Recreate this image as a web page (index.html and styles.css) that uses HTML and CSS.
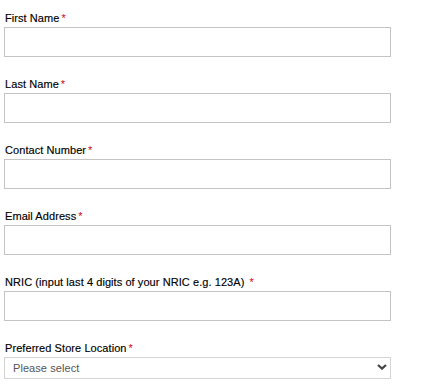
FILE: index.html
```html
<!DOCTYPE html>
<html lang="en">
<head>
	<meta charset="UTF-8">
	<title>Enquiry Form</title>
	<link rel="stylesheet" href="styles.css">
</head>
<body>
	<form class="enquiry-form">
		<div class="field">
			<label for="firstName">First Name<span class="req">*</span></label>
			<input type="text" class="styled-input" id="firstName">
		</div>

		<div class="field">
			<label for="lastName">Last Name<span class="req">*</span></label>
			<input type="text" class="styled-input" id="lastName">
		</div>

		<div class="field">
			<label for="contactNumber">Contact Number<span class="req">*</span></label>
			<input type="text" class="styled-input" id="contactNumber">
		</div>

		<div class="field">
			<label for="email">Email Address<span class="req">*</span></label>
			<input type="text" class="styled-input" id="email">
		</div>

		<div class="field">
			<label for="nric">NRIC (input last 4 digits of your NRIC e.g. 123A) <span class="req">*</span></label>
			<input type="text" class="styled-input" id="nric">
		</div>

		<div class="field">
			<label for="store">Preferred Store Location<span class="req">*</span></label>
			<div class="select-wrap">
				<select id="store" class="styled-select">
					<option>Please select</option>
				</select>
				<svg class="chevron" width="10" height="6" viewBox="0 0 10 6">
					<path d="M1 1 L5 4.6 L9 1" fill="none" stroke="#444" stroke-width="2.2"/>
				</svg>
			</div>
		</div>
	</form>
</body>
</html>
```

FILE: styles.css
```css
body {
	margin: 0;
	background-color: #fff;
	font-family: Arial, 'Liberation Sans', sans-serif;
	color: #000;
}

.enquiry-form {
	width: 387px;
	padding: 11px 0 0 4px;
}

.field {
	margin-bottom: 20px;
}

.field label {
	display: block;
	font-size: 11px;
	line-height: 14px;
	letter-spacing: 0.07px;
	margin-bottom: 2px;
	padding-left: 1px;
	-webkit-text-stroke: 0.15px #000;
}

.req {
	color: #d0021b;
	margin-left: 2px;
	-webkit-text-stroke: 0;
}

.styled-input {
	display: block;
	box-sizing: border-box;
	width: 100%;
	height: 30px;
	margin: 0;
	border: 1px solid #c4c4c4;
	background-color: #fff;
	outline: none;
}

.select-wrap {
	position: relative;
}

.styled-select {
	display: block;
	box-sizing: border-box;
	width: 100%;
	height: 22px;
	margin: 0;
	padding: 0 0 0 8px;
	border: 1px solid #d4d4d4;
	background-color: #fff;
	font-family: Arial, 'Liberation Sans', sans-serif;
	font-size: 11px;
	letter-spacing: 0.07px;
	color: #555;
	appearance: none;
	outline: none;
}

.chevron {
	position: absolute;
	right: 4px;
	top: 7px;
	pointer-events: none;
}
```
